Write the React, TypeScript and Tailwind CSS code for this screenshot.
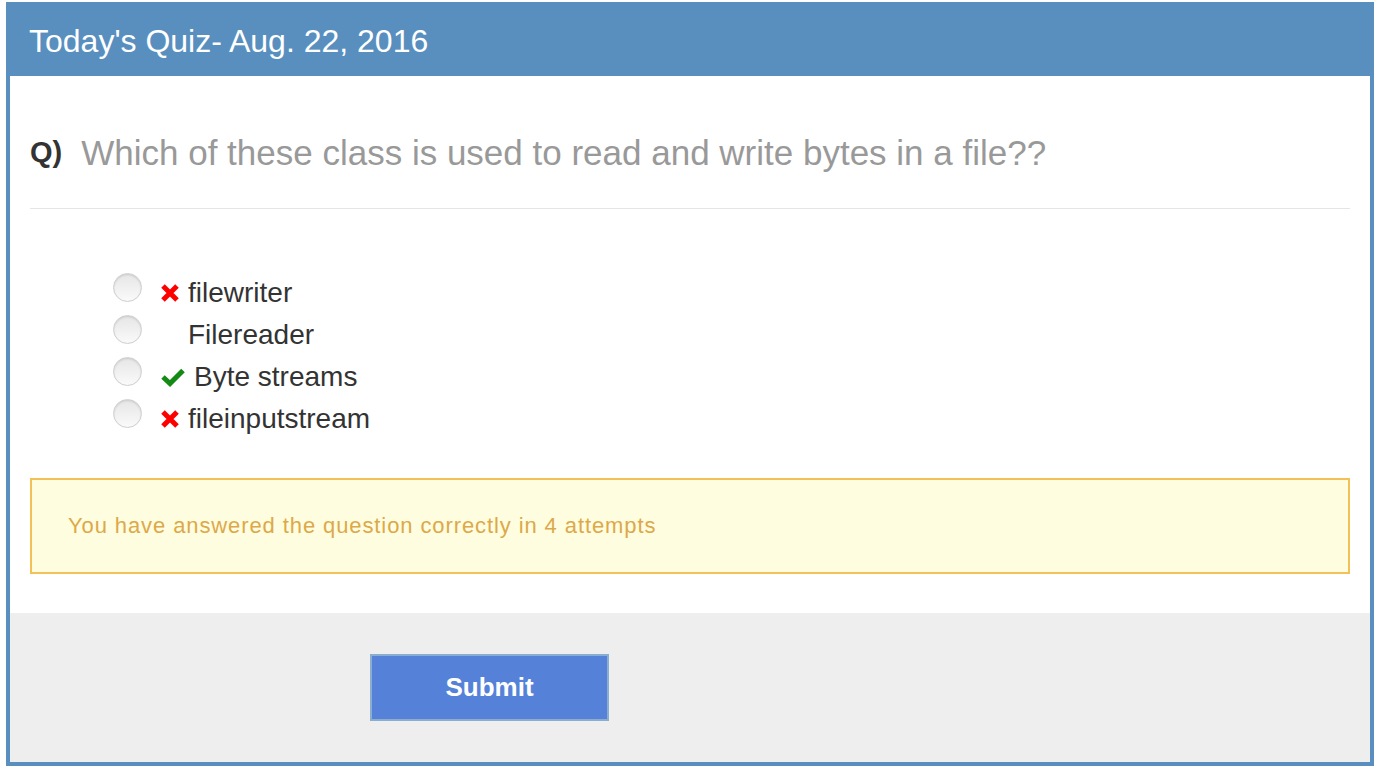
import React from 'react';

type Option = { label: string; mark: 'wrong' | 'right' | 'none' };

const options: Option[] = [
  { label: 'filewriter', mark: 'wrong' },
  { label: 'Filereader', mark: 'none' },
  { label: 'Byte streams', mark: 'right' },
  { label: 'fileinputstream', mark: 'wrong' },
];

function WrongMark() {
  return (
    <svg width="20" height="20" viewBox="0 0 20 20" className="shrink-0">
      <path d="M3 3 L17 17 M17 3 L3 17" stroke="#ff0000" strokeWidth="5" strokeLinecap="butt" />
    </svg>
  );
}

function RightMark() {
  return (
    <svg width="26" height="20" viewBox="0 0 26 20" className="shrink-0">
      <path d="M3 10 L10 16.5 L23 3.5" stroke="#138a13" strokeWidth="5" fill="none" strokeLinejoin="miter" />
    </svg>
  );
}

function Radio() {
  return (
    <span className="mt-[-10px] inline-block h-[29px] w-[29px] shrink-0 rounded-full border border-[#cfcfcf] bg-gradient-to-b from-[#e6e6e6] to-[#fafafa] shadow-[inset_0_1px_2px_rgba(0,0,0,0.12)]" />
  );
}

export default function App() {
  return (
    <div className="min-h-[770px] w-[1376px] bg-white pt-[2px] pl-[6px]" style={{ fontFamily: '"Liberation Sans", Arial, sans-serif' }}>
      <div className="flex h-[764px] w-[1368px] flex-col border-4 border-t-0 border-[#588fbf]">
        <div className="-mx-[4px] flex h-[74px] items-center bg-[#588fbf] pt-[4px] pl-[23px]">
          <h1 className="text-[32px] leading-none font-normal text-white">Today's Quiz- Aug. 22, 2016</h1>
        </div>

        <div className="flex-1 bg-white px-[20px]">
          <div className="flex h-[133px] items-center gap-[19px] border-b border-[#e5e5e5] pt-[24px] pb-[3px]">
            <span className="text-[29px] leading-none font-bold text-[#333333]">Q)</span>
            <span className="text-[35px] leading-none text-[#999999]">Which of these class is used to read and write bytes in a file??</span>
          </div>

          <ul className="flex flex-col gap-[13px] pt-[69px] pl-[83px]">
            {options.map((o) => (
              <li key={o.label} className="flex h-[29px] items-center">
                <Radio />
                <span className="ml-[18px] flex w-[28px] items-center">
                  {o.mark === 'wrong' && <WrongMark />}
                  {o.mark === 'right' && <RightMark />}
                </span>
                <span className={`text-[28px] leading-none text-[#333333] ${o.mark === 'right' ? 'ml-[6px]' : 'ml-0'}`}>{o.label}</span>
              </li>
            ))}
          </ul>

          <div className="mt-[45px] flex h-[96px] items-center border-2 border-[#f4c058] bg-[#fffddf] pl-[36px]">
            <p className="text-[22px] leading-none tracking-[0.9px] text-[#dca94a]">You have answered the question correctly in 4 attempts</p>
          </div>
        </div>

        <div className="flex h-[149px] items-center bg-[#eeeeee] pl-[360px]">
          <button className="flex h-[67px] w-[239px] items-center justify-center border-2 border-[#8aaed0] bg-[#5582d8] text-[26px] font-bold text-white">
            Submit
          </button>
        </div>
      </div>
    </div>
  );
}
